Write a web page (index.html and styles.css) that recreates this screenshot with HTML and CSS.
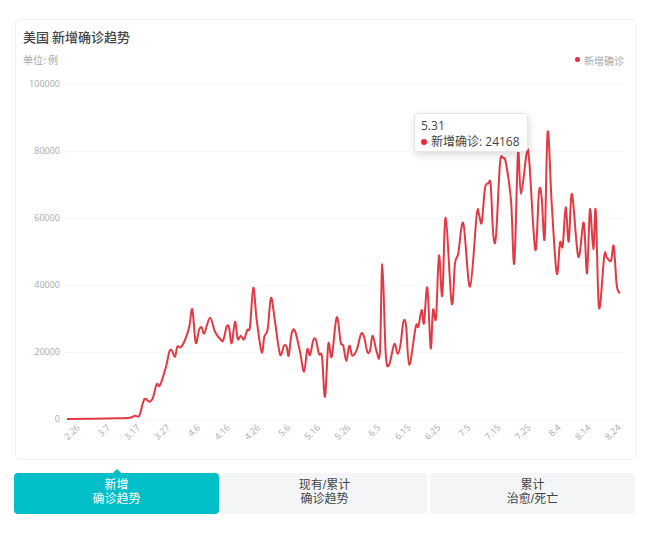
FILE: index.html
```html
<!DOCTYPE html>
<html lang="zh">
<head>
    <meta charset="UTF-8">
    <title>美国 新增确诊趋势</title>
    <link rel="stylesheet" href="styles.css">
</head>
<body>
    <div class="card">
        <h1 class="title">美国 新增确诊趋势</h1>
        <div class="meta">
            <span class="unit">单位: 例</span>
            <span class="legend"><i class="dot"></i>新增确诊</span>
        </div>
        <svg id="chart" class="chart" viewBox="16 74 620 384"></svg>
        <div class="tooltip">
            <div>5.31</div>
            <div class="tooltip-row"><i class="dot dot-tip"></i>新增确诊: 24168</div>
        </div>
    </div>
    <div class="tabs">
        <div class="tab active">新增<br>确诊趋势</div>
        <div class="tab">现有/累计<br>确诊趋势</div>
        <div class="tab">累计<br>治愈/死亡</div>
    </div>
    <script src="chart.js"></script>
</body>
</html>
```
FILE: styles.css
```css
* {
    box-sizing: border-box;
}
body {
    margin: 0;
    padding: 19px 11px 0 14px;
    background-color: #fff;
    font-family: "Noto Sans CJK SC", "Open Sans", sans-serif;
    color: #333;
}
.card {
    position: relative;
    margin: 0 -2px 13px 1px;
    height: 441px;
    border: 1px solid #f2f2f2;
    border-radius: 5px;
}
.title {
    margin: 0;
    padding: 8px 0 0 7px;
    font-size: 13px;
    font-weight: 500;
    line-height: 18px;
    color: #444;
}
.meta {
    display: flex;
    justify-content: space-between;
    align-items: center;
    padding: 3px 12px 0 7px;
    height: 23px;
    font-size: 10px;
    color: #a8a8a8;
}
.legend {
    display: flex;
    align-items: center;
    padding-top: 3px;
}
.dot {
    display: inline-block;
    width: 5px;
    height: 5px;
    margin: -2px 4px 0 0;
    border-radius: 50%;
    background-color: #e0303f;
}
.chart {
    display: block;
    width: 620px;
    height: 384px;
    margin-top: 5px;
}
.grid {
    stroke: #f8f8f8;
    stroke-width: 1;
}
.axis-text {
    font-family: "Open Sans", sans-serif;
    font-size: 9px;
    fill: #aaa;
}
.line {
    fill: none;
    stroke: #e23a44;
    stroke-width: 2;
    stroke-linejoin: round;
}
.tooltip {
    position: absolute;
    left: 398px;
    top: 93px;
    width: 114px;
    height: 39px;
    padding: 4px 6px;
    background-color: #fff;
    border: 1px solid #e6e6e6;
    border-radius: 4px;
    box-shadow: 1px 3px 8px rgba(0, 0, 0, 0.15);
    font-family: "Open Sans", "Noto Sans CJK SC", sans-serif;
    font-size: 12px;
    line-height: 15px;
    white-space: nowrap;
    color: #444;
}
.tooltip-row {
    display: flex;
    align-items: center;
    margin-top: 1px;
}
.dot-tip {
    width: 6px;
    height: 6px;
    margin: 0 4px 0 0;
    flex: none;
    background-color: #ee2738;
}
.tabs {
    display: flex;
    gap: 3px;
}
.tab {
    position: relative;
    flex: 1;
    height: 41px;
    padding-top: 5px;
    border-radius: 4px;
    background-color: #f4f5f7;
    font-family: "Liberation Sans", "Noto Sans CJK SC", sans-serif;
    font-size: 12px;
    line-height: 14px;
    text-align: center;
    color: #444;
}
.tab.active {
    background-color: #00bfc9;
    color: #fff;
}
.tab.active::before {
    content: "";
    position: absolute;
    left: 50%;
    top: -4px;
    margin-left: -4px;
    border-left: 4px solid transparent;
    border-right: 4px solid transparent;
    border-bottom: 4px solid #00bfc9;
}
```
FILE: chart.js
```js
const svg = document.getElementById('chart');
const NS = 'http://www.w3.org/2000/svg';

const yLabels = ['100000', '80000', '60000', '40000', '20000', '0'];
const xLabels = ['2.26', '3.7', '3.17', '3.27', '4.6', '4.16', '4.26', '5.6', '5.16', '5.26',
    '6.5', '6.15', '6.25', '7.5', '7.15', '7.25', '8.4', '8.14', '8.24'];

// turning points of the curve, in page pixels
const points = [
    [67,419],[117,418.3],[130,417.7],[135,415.7],[139.3,415.7],[144.3,399.3],[149.3,401.7],[152.7,398.3],
    [156.7,384.3],[160,385.3],[166,366.7],[169.3,351.7],[171.7,350.3],[175,356.7],[177.3,346.7],[180.7,347.3],
    [185,340],[189.3,326.7],[192.3,309.3],[195.7,342.7],[199,330],[201.7,327.3],[204.3,333.3],[210,317.7],
    [215,331.7],[221,340],[223.3,340],[226.7,326.7],[229,327.3],[231.7,343.3],[235,321.7],[237.7,339],
    [240.7,335.7],[244,339.3],[247.3,330],[250,326.7],[253.3,287.7],[256.7,320],[261.7,352.3],[264.3,336.7],
    [267.7,329],[271,297.7],[275,321.7],[280,354.3],[284,345.7],[286.7,346.7],[288.7,355.7],[291.7,333.3],
    [295,331],[300,351.7],[304,371.7],[307.3,349.3],[310,355],[313.3,340],[316,340],[319,354],[322,356.7],
    [325,396.7],[328.3,344],[331.7,356.7],[336.7,317.3],[340.7,342.3],[343.3,345.7],[346.3,361],[349.3,345.7],
    [352.3,355.7],[356.7,350],[361,334],[364,336.7],[367.3,351.7],[370,350.7],[372.7,335.7],[376.7,351.7],
    [380,351.7],[382.3,264.3],[385.7,353.3],[389,365],[394.3,344],[397.7,354],[400.7,343.3],[403.3,322.3],
    [406,325],[409.3,365],[415.7,326.7],[418.3,326.7],[421.7,310],[424,323.3],[427.3,287.7],[430.7,348.3],
    [433,310],[436,318],[439,255.7],[442.3,295.7],[445.7,217.7],[451.7,303.3],[455,263.3],[458.3,253.3],
    [463.3,223.3],[470,286.7],[476.7,215],[479,214.3],[481.7,222.7],[485,188.3],[488.3,183.3],[490.7,185],
    [493.3,235],[496,236],[500,163.3],[503.3,158.3],[506,163.3],[511,200],[514.3,263.3],[518,153.3],[521,194],
    [526.7,153.3],[529.3,161.7],[535.3,250],[539,191.7],[541.7,198.3],[544.7,238.3],[547.7,131.7],[551.7,203.3],
    [556.7,273.3],[560,242.7],[562.7,246],[565.7,207.3],[568.7,241.7],[572,194],[578.3,256.7],[583.7,222.7],
    [587,273.3],[590,209.3],[593.3,249.3],[595.7,210],[599,307.7],[604.3,255.7],[606.7,257.3],[611,260.7],
    [613.7,246],[616.7,285],[619.7,293.3]
];

function add(tag, attrs, text) {
    const el = document.createElementNS(NS, tag);
    for (const key in attrs) {
        el.setAttribute(key, attrs[key]);
    }
    if (text) {
        el.textContent = text;
    }
    svg.appendChild(el);
    return el;
}

// catmull-rom through the points
function smoothPath(pts) {
    let d = 'M' + pts[0][0] + ' ' + pts[0][1];
    for (let i = 0; i < pts.length - 1; i++) {
        const p0 = pts[i - 1] || pts[i];
        const p1 = pts[i];
        const p2 = pts[i + 1];
        const p3 = pts[i + 2] || p2;
        const c1x = p1[0] + (p2[0] - p0[0]) / 6;
        const c1y = p1[1] + (p2[1] - p0[1]) / 6;
        const c2x = p2[0] - (p3[0] - p1[0]) / 6;
        const c2y = p2[1] - (p3[1] - p1[1]) / 6;
        d += 'C' + c1x.toFixed(1) + ' ' + c1y.toFixed(1) + ' ' + c2x.toFixed(1) + ' ' + c2y.toFixed(1) + ' ' + p2[0] + ' ' + p2[1];
    }
    return d;
}

yLabels.forEach(function(label, i) {
    const y = 84 + i * 67;
    add('line', { class: 'grid', x1: 63, x2: 624, y1: y + 0.5, y2: y + 0.5 });
    add('text', { class: 'axis-text', x: 60, y: y + 2.5, 'text-anchor': 'end' }, label);
});

xLabels.forEach(function(label, i) {
    const x = 80.5 + i * 30.05;
    add('text', { class: 'axis-text', x: x, y: 428, 'text-anchor': 'end', transform: 'rotate(-45 ' + x + ' 428)' }, label);
});

add('path', { class: 'line', d: smoothPath(points) });
```
